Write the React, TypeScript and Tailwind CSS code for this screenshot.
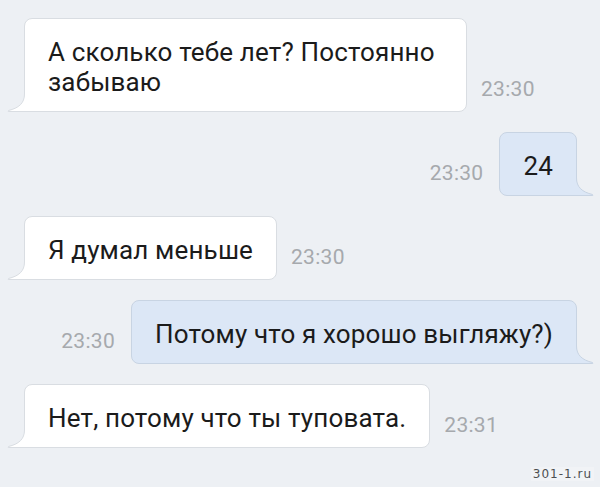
import React from "react";

const font = { fontFamily: "Roboto, 'Noto Sans', sans-serif" };

function InTail() {
  return (
    <svg className="absolute left-[-18px] bottom-[-1px]" width="18" height="18" viewBox="0 0 18 18">
      <path d="M17.5 0 C17.5 9 12 14 1.5 16.5 Q0.3 17.5 2 17.5 L18 17.5 L18 0 Z" fill="#ffffff" />
      <path d="M17.5 0 C17.5 9 12 14 1.5 16.5 Q0.3 17.5 2 17.5 L18 17.5" fill="none" stroke="#d9dde2" strokeWidth="1" />
    </svg>
  );
}

function OutTail() {
  return (
    <svg className="absolute right-[-18px] bottom-[-1px]" width="18" height="18" viewBox="0 0 18 18">
      <path d="M0.5 0 C0.5 9 6 14 16.5 16.5 Q17.7 17.5 16 17.5 L0 17.5 L0 0 Z" fill="#dce7f6" />
      <path d="M0.5 0 C0.5 9 6 14 16.5 16.5 Q17.7 17.5 16 17.5 L0 17.5" fill="none" stroke="#c8d4e3" strokeWidth="1" />
    </svg>
  );
}

function Time({ t }: { t: string }) {
  return (
    <div className="text-[21px] leading-[20px] tracking-[0.3px] text-[#a6a9ad] mb-[13px] shrink-0">{t}</div>
  );
}

function In({ text, time, maxW }: { text: string; time: string; maxW?: string }) {
  return (
    <div className="flex items-end gap-[14px] pl-[24px]">
      <div
        className={`relative bg-white border border-[#d9dde2] rounded-[8px] rounded-bl-none px-[23px] pt-[18px] pb-[14px] text-[26px] leading-[30px] tracking-[0.15px] text-[#1b1b1b] ${maxW ?? ""}`}
      >
        {text}
        <InTail />
      </div>
      <Time t={time} />
    </div>
  );
}

function Out({ text, time }: { text: string; time: string }) {
  return (
    <div className="flex items-end justify-end gap-[16px] pr-[23px]">
      <Time t={time} />
      <div className="relative bg-[#dce7f6] border border-[#c8d4e3] rounded-[8px] rounded-br-none px-[23px] pt-[18px] pb-[14px] text-[26px] leading-[30px] tracking-[0.15px] text-[#1b1b1b]">
        {text}
        <OutTail />
      </div>
    </div>
  );
}

export default function App() {
  return (
    <div className="relative w-[600px] h-[487px] bg-[#edf0f4] overflow-hidden flex flex-col pt-[18px] gap-[20px]" style={font}>
      <In text="А сколько тебе лет? Постоянно забываю" time="23:30" maxW="max-w-[443px]" />
      <Out text="24" time="23:30" />
      <In text="Я думал меньше" time="23:30" />
      <Out text="Потому что я хорошо выгляжу?)" time="23:30" />
      <In text="Нет, потому что ты туповата." time="23:31" />
      <div className="absolute right-[6px] bottom-[6px] px-[2px] text-[12px] leading-[14px] tracking-[1px] text-[#4d4f52] bg-[#f1f3f6]" style={{ fontFamily: "'DejaVu Sans', sans-serif" }}>
        301-1.ru
      </div>
    </div>
  );
}
